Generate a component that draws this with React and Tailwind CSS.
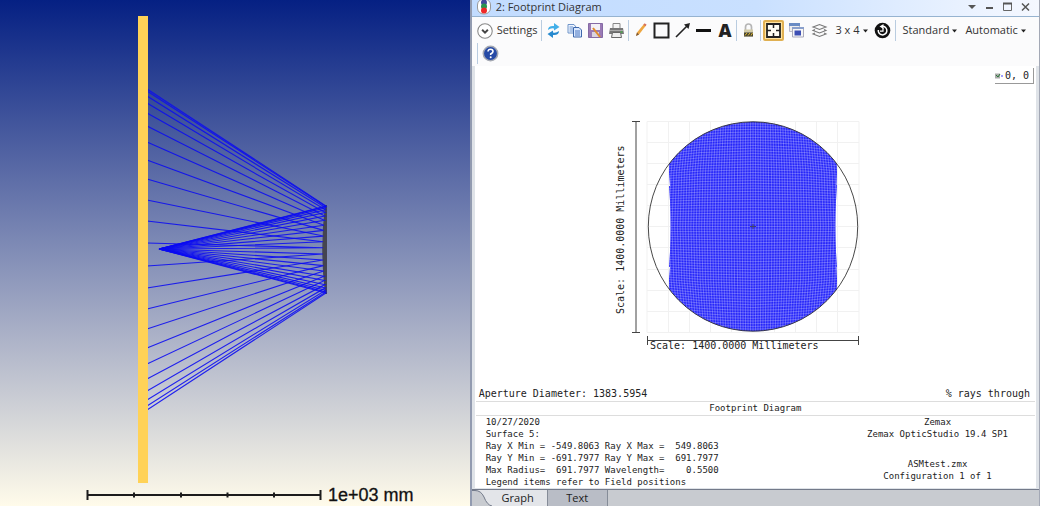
import React from "react";

const startHeights = [89, 91, 96, 103, 113, 126, 142, 160, 179, 200, 221, 243, 266, 288, 309, 329, 348, 364, 379, 391, 400, 406, 410];
const rays = startHeights.map((y) => {
  const t = (y - 249.5) / 160.5;
  return { y, hitX: 323 + 3 * t * t, hitY: 249.5 + t * 43.5 };
});

function Layout() {
  return (
    <svg viewBox="0 0 471 506" className="block h-[506px] w-full" preserveAspectRatio="xMinYMin slice" role="img" aria-label="Ray layout">
      <path d="M325 205H327V294H325Q319.500 249 325 205Z" fill="#444450" />
      <g stroke="#0a0af2" strokeWidth="1.100" fill="none" strokeOpacity=".88">
        {rays.map((r) => (
          <path key={r.y} d={`M147 ${r.y}L${r.hitX} ${r.hitY}L159 249`} />
        ))}
      </g>
      <rect x="138" y="16" width="10" height="467" fill="#ffd257" />
      <path d="M87.500 495H320.500M87.500 490V500M320.500 490V500M134 492.500V497.500M181 492.500V497.500M227.500 492.500V497.500M274 492.500V497.500" stroke="#1c1c1c" strokeWidth="2" />
      <text x="328" y="501" fontFamily="Liberation Sans, Arial, sans-serif" fontSize="18" fill="#111" stroke="#111" strokeWidth=".3">1e+03 mm</text>
    </svg>
  );
}

const lineOffsets = Array.from({ length: 101 }, (_, i) => i - 50);

function Footprint() {
  return (
    <svg viewBox="0 0 250 246" className="block h-[246px] w-[250px]" role="img" aria-label="Footprint plot">
      <defs>
        <clipPath id="beam">
          <path d="M58 53A104.500 104.500 0 0 1 226 53V62L225.500 74H226L225 90Q224 115 225 141L226 156H225.500L226 168V178A104.500 104.500 0 0 1 58 178V168L59 156H58L59 141Q60 115 59 90L58 75H59L58 62Z" />
        </clipPath>
      </defs>
      <path d="M36 10.500H248V221.500H36ZM57.500 10V221M78.500 10V221M99.500 10V221M120.500 10V221M141.500 10V221M163.500 10V221M184.500 10V221M205.500 10V221M226.500 10V221M36 31.500H248M36 52.500H248M36 73.500H248M36 94.500H248M36 115.500H248M36 136.500H248M36 158.500H248M36 179.500H248M36 200.500H248" fill="none" stroke="#f1f1f1" />
      <g clipPath="url(#beam)">
        <rect x="36" y="8" width="212" height="216" fill="#2626fa" />
        <g fill="none" stroke="#ffffff" strokeWidth=".7" strokeOpacity=".36">
          {lineOffsets.map((i) => {
            const d = i * 2.7;
            const bend = d * 0.09;
            return (
              <React.Fragment key={i}>
                <path d={`M36 ${115.5 + d - bend}Q142 ${115.5 + d + bend} 248 ${115.5 + d - bend}`} />
                <path d={`M${142 + d - bend} 8Q${142 + d + bend} 115 ${142 + d - bend} 224`} />
              </React.Fragment>
            );
          })}
        </g>
      </g>
      <circle cx="142" cy="115.500" r="104.700" fill="none" stroke="#333333" strokeWidth=".9" />
      <path d="M139 115.500H145M142 113V118" stroke="#44446a" />
      <path d="M25 10V221.500M21 10.500H29M21 221.500H29M36 229.500H248M36.500 225V234M247.500 225V234" fill="none" stroke="#444444" />
      <text transform="translate(13 203) rotate(-90)" fontFamily="'DejaVu Sans Mono', monospace" fontSize="10" fill="#222">Scale: 1400.0000 Millimeters</text>
      <text x="39" y="238" fontFamily="'DejaVu Sans Mono', monospace" fontSize="10" fill="#222">Scale: 1400.0000 Millimeters</text>
    </svg>
  );
}

function Icon({ label, children, active }) {
  return (
    <button aria-label={label} className={active ? "flex h-[21px] w-[21px] shrink-0 items-center justify-center rounded-xs border-2 border-[#e0b052] bg-[#ffe3a0]" : "flex h-[21px] w-[21px] shrink-0 items-center justify-center"}>
      <svg width="17" height="17" viewBox="0 0 17 17" fill="none" className="shrink-0">{children}</svg>
    </button>
  );
}

function Divider() {
  return <span className="h-[21px] w-px shrink-0 bg-[#b9cce0]" />;
}

function Picker({ children }) {
  return (
    <button className="flex shrink-0 items-center gap-[3px] whitespace-nowrap">
      {children}
      <svg width="5" height="4" viewBox="0 0 5 4"><path d="M0 .5H5L2.500 3.500Z" fill="#222" /></svg>
    </button>
  );
}

function Toolbar() {
  return (
    <div role="toolbar" className="bg-[#fbfbfc] pt-[3px] text-[11px] text-[#333]">
      <div className="flex h-[21px] items-center pl-[5px]">
        <button className="mr-1 flex shrink-0 items-center gap-1">
          <svg width="16" height="16" viewBox="0 0 15 15" fill="none"><circle cx="7.500" cy="7.500" r="6.800" stroke="#888" fill="#fff" /><path d="M4.800 6.300L7.500 9L10.200 6.300" stroke="#444" strokeWidth="1.800" /></svg>
          Settings
        </button>
        <Divider />
        <span className="w-px shrink-0" />
        <div className="flex shrink-0">
          <Icon label="Refresh">
            <path d="M3 8Q3 3.500 9 4V1L14.500 5L9 8.500V6.500Q6 5.500 3 8Z" fill="#43afe8" /><path d="M14 9Q14 13.500 8 13V16L2.500 12L8 8.500V10.500Q11 11.500 14 9Z" fill="#2689cf" />
          </Icon>
          <Icon label="Copy">
            <path d="M2 2.500H8L10 5V11H2Z" fill="#eef5ff" stroke="#6f94c9" /><path d="M3.500 5H7M3.500 7H7M3.500 9H7" stroke="#6b93cf" /><path d="M7.500 5.500H13L15.500 8V15H7.500Z" fill="#dbe9ff" stroke="#3e68ac" /><path d="M9 9H14M9 11H14M9 13H14" stroke="#4a77c0" />
          </Icon>
          <Icon label="Save">
            <path d="M1.500 1.500H15.500V15.500H1.500Z" fill="#9a7ab5" stroke="#856aa5" /><path d="M4 2H13V8H4Z" fill="#f3f0f6" /><path d="M5 10H12V15H5Z" fill="#d9d3df" /><path d="M6 6L13 15" stroke="#e08a2c" strokeWidth="2" />
          </Icon>
          <Icon label="Print">
            <path d="M5 1.500H12V7H5Z" fill="#f4f4f4" stroke="#888" /><path d="M2 6H15L16 12H1Z" fill="#777" /><path d="M2 8.500H15" stroke="#aaa" /><path d="M4.500 10.500H12.500L13.500 15.500H3.500Z" fill="#eee" stroke="#666" /><circle cx="13.500" cy="10" r="1" fill="#4cab4c" />
          </Icon>
        </div>
        <span className="w-px shrink-0" />
        <Divider />
        <span className="w-px shrink-0" />
        <div className="flex shrink-0">
          <Icon label="Pencil"><path d="M4 14L5 10.500L12 2L14 3.500L7 12.500Z" fill="#eea640" /><path d="M12 2L14 3.500" stroke="#d66f5b" strokeWidth="2" /><path d="M4 14L5 10.500L7 12.500Z" fill="#77553a" /></Icon>
          <Icon label="Rectangle"><path d="M1.500 1.500H15.500V15.500H1.500Z" stroke="#222" strokeWidth="2" /></Icon>
          <Icon label="Arrow"><path d="M2 15L13 4" stroke="#222" strokeWidth="1.600" /><path d="M16 1L10 2.500L14.500 7Z" fill="#222" /></Icon>
          <Icon label="Line"><path d="M1 8.500H16" stroke="#111" strokeWidth="3" /></Icon>
          <button className="flex h-[21px] w-[21px] shrink-0 items-center justify-center font-['Open_Sans'] text-[18px] font-extrabold text-[#222]">A</button>
        </div>
        <span className="w-px shrink-0" />
        <Divider />
        <span className="w-px shrink-0" />
        <Icon label="Lock"><path d="M5.500 8V5Q5.500 2 8.500 2T11.500 5V8" stroke="#b5b5b5" strokeWidth="1.700" /><path d="M4 7.500H13V14.500H4Z" fill="#d2cba8" /><path d="M4 10.500H13V14.500H4Z" fill="#464333" /><path d="M5 13.500L7 11M8 13.500L10 11M11 13.500L12.500 11" stroke="#e5bc30" /></Icon>
        <span className="w-px shrink-0" />
        <Divider />
        <span className="w-[2px] shrink-0" />
        <Icon label="Fit window" active><path d="M2 2H15V15H2Z" fill="#fffdf4" stroke="#222" strokeWidth="1.800" /><path d="M8.500 2V6M8.500 11V15M2 8.500H6M11 8.500H15" stroke="#222" strokeWidth="1.500" /></Icon>
        <span className="w-[2px] shrink-0" />
        <Icon label="Windows"><path d="M1.500 1.500H11.500V9.500H1.500Z" fill="#eee" stroke="#bbc" /><path d="M1 1H12V4H1Z" fill="#6a8cc4" /><path d="M4.500 5.500H15.500V15H4.500Z" fill="#f7f7f7" stroke="#aab" /><path d="M4 5H16V7H4Z" fill="#8aa0cc" /><path d="M6.500 8.500H13V13.500H6.500Z" fill="#3d4eb4" /></Icon>
        <span className="w-[2px] shrink-0" />
        <Icon label="Layers"><path d="M2 5L8.500 2.500L15 5L8.500 7.500ZM4 7.500L2 8.500L8.500 11L15 8.500L13 7.500M4 11L2 12L8.500 14.500L15 12L13 11" stroke="#777" strokeWidth="1.100" /></Icon>
        <span className="w-[5px] shrink-0" />
        <Picker>3 x 4</Picker>
        <span className="w-1 shrink-0" />
        <Icon label="Reset"><circle cx="8.500" cy="8.500" r="7.800" fill="#111" /><path d="M9 4.300A4.300 4.300 0 1 1 4.300 8" stroke="#fff" strokeWidth="1.500" /><path d="M9.500 2L5.500 4.500L9.500 7Z" fill="#fff" /><path d="M9 6V9.200H6" stroke="#fff" strokeWidth="1.200" /></Icon>
        <span className="w-[2px] shrink-0" />
        <Divider />
        <span className="w-[7px] shrink-0" />
        <Picker>Standard</Picker>
        <span className="w-2 shrink-0" />
        <Picker>Automatic</Picker>
      </div>
      <div className="flex h-[25px] items-center pl-[5px]">
        <Divider />
        <span className="w-[2px] shrink-0" />
        <Icon label="Help"><circle cx="8.500" cy="8.500" r="7.200" fill="#264aa6" stroke="#a4a8b2" strokeWidth="1.500" /><path d="M6 6.500Q6.200 4.300 8.600 4.300T11 6.500Q11 7.700 8.700 9V10" stroke="#fff" strokeWidth="1.600" /><circle cx="8.700" cy="12.200" r="1" fill="#fff" /></Icon>
      </div>
    </div>
  );
}

export default function App() {
  return (
    <main className="flex min-h-screen w-full bg-white font-['Open_Sans',sans-serif]">
      <section className="min-w-0 flex-[471] bg-linear-to-b/srgb from-[#052083] to-[#fffbea]"><Layout /></section>
      <section className="flex min-w-0 flex-[569] flex-col border-r border-l-2 border-r-[#a3a8b5] border-l-[#929bb0] bg-[#dfe3e8]">
        <header className="flex h-[17px] items-center border-b border-[#96b3d0] bg-linear-to-r from-[#c2dcff] via-[#c9e0ff] to-[#f5f8ff] pr-[7px] pl-1 text-[11px] leading-4 text-[#333]">
          <svg width="16" height="16" viewBox="0 0 16 16" className="shrink-0"><rect x="1.500" y="-1" width="13" height="15" rx="6" fill="#fff" stroke="#999" /><circle cx="8" cy="2.500" r="3" fill="#424a9d" /><circle cx="8" cy="6.500" r="3" fill="#299450" /><circle cx="8" cy="10.500" r="3" fill="#ef2929" /></svg>
          <h1 className="ml-1 flex-1 pb-[3px]">2: Footprint Diagram</h1>
          <div className="flex gap-[5px] pb-[3px]">
            <button aria-label="Window menu"><svg width="13" height="12" viewBox="0 0 13 12"><path d="M3 4H11L7 8Z" fill="#555" /></svg></button>
            <button aria-label="Minimize"><svg width="13" height="12" viewBox="0 0 13 12"><path d="M3 7H10" stroke="#555" strokeWidth="2" /></svg></button>
            <button aria-label="Maximize"><svg width="13" height="12" viewBox="0 0 13 12"><path d="M2.500 2.500H10.500V9.500H2.500Z" fill="none" stroke="#666" /><path d="M2 2.500H11" stroke="#555" strokeWidth="2" /></svg></button>
            <button aria-label="Close"><svg width="13" height="12" viewBox="0 0 13 12"><path d="M3 2.500L10 9.500M10 2.500L3 9.500" stroke="#555" strokeWidth="1.500" /></svg></button>
          </div>
        </header>
        <Toolbar />
        <div className="mr-[3px] ml-[3px] flex flex-col bg-white px-px font-['DejaVu_Sans_Mono',monospace] text-[#222]">
          <div className="flex h-[18px] justify-end pt-[2px] pr-px">
            <span className="flex items-center gap-[2px] border-r border-b border-[#999] pr-1 text-[10px] leading-4"><svg width="8" height="6" viewBox="0 0 8 6"><path d="M0 .5H5V5.500H0Z" fill="#aaa" /><path d="M1 2L3 4L5 1" stroke="#287a38" fill="none" /><path d="M6 3H8" stroke="#44f" /></svg>0, 0</span>
          </div>
          <div className="flex justify-center pt-[27px] pr-[39px]"><Footprint /></div>
          <div className="flex h-[45px] items-end justify-between border-b border-[#ddd] pr-[5px] pb-px pl-[3px] text-[10px] leading-3"><span>Aperture Diameter: 1383.5954</span><span>% rays through</span></div>
          <h2 className="h-[14px] border-b border-[#ddd] text-center text-[9px] leading-3">Footprint Diagram</h2>
          <div className="flex justify-between pr-[27px] pl-[10px] text-[9px] leading-3">
            <pre className="font-['DejaVu_Sans_Mono',monospace]">{`10/27/2020
Surface 5:
Ray X Min = -549.8063 Ray X Max =  549.8063
Ray Y Min = -691.7977 Ray Y Max =  691.7977
Max Radius=  691.7977 Wavelength=    0.5500
Legend items refer to Field positions`}</pre>
            <div className="text-center"><p>Zemax</p><p>Zemax OpticStudio 19.4 SP1</p><p className="pt-[18px]">ASMtest.zmx</p><p>Configuration 1 of 1</p></div>
          </div>
        </div>
        <div role="tablist" className="mt-px flex min-h-4 flex-1 items-stretch border-t border-[#737a8a] bg-[#c8cbd0] text-[11px] leading-4 text-[#222]">
          <svg width="21" height="16" viewBox="0 0 21 16" className="shrink-0"><path d="M0 0H3Q9 0 12 7Q15 15 20 16H21V0Z" fill="#e3e5e9" /><path d="M0 .5H3Q9 .5 12 7Q15 15 20 16" fill="none" stroke="#737a8a" /></svg>
          <button role="tab" aria-selected="true" className="w-[54px] bg-[#e3e5e9] pr-1">Graph</button>
          <button role="tab" aria-selected="false" className="w-[61px] border-x border-[#858c98] bg-[#b9bdc6]">Text</button>
        </div>
      </section>
    </main>
  );
}
